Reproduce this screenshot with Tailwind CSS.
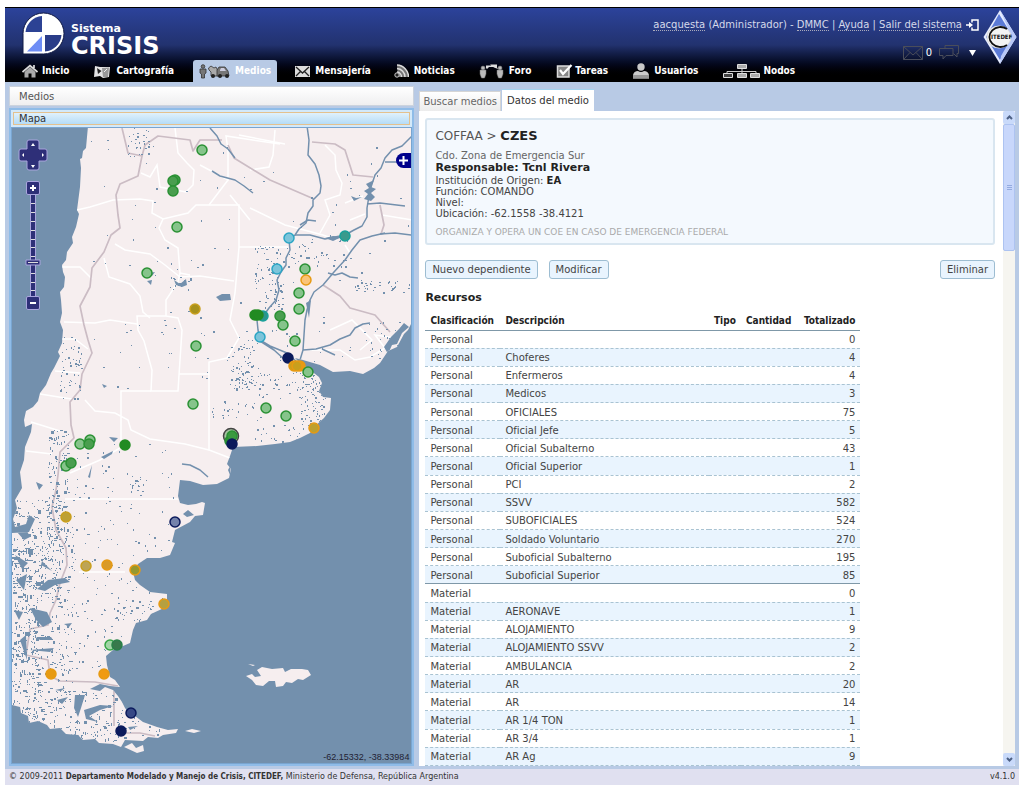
<!DOCTYPE html>
<html lang="es">
<head>
  <meta charset="UTF-8">
  <meta name="viewport" content="width=device-width, initial-scale=1">
  <title>Sistema CRISIS - Medios</title>
  <script src="https://cdn.jsdelivr.net/npm/@tailwindcss/browser@4"></script>
</head>
<body class="bg-white font-['DejaVu_Sans',sans-serif] text-[10px] leading-[12px] text-[#444]">
<div class="flex h-screen flex-col px-[5px] pt-[7px] pb-[6px]">

  <!-- Header -->
  <header class="flex h-[75px] shrink-0 flex-col border-t border-black bg-linear-to-b from-[#2c439b] via-[#22326f] via-50% to-black to-95% text-white">
    <div class="flex h-[52px] justify-between">
      <a href="#" class="flex pt-[4px] pl-[17px]">
        <svg class="h-[43px] w-[43px]" viewBox="0 0 43 43">
          <path d="M1 42V21.500A20.500 20.500 0 1 1 21.500 42Z" fill="#fff" stroke="#111a45" stroke-width="1"/>
          <path d="M20 4V20H3.500A18 18 0 0 1 20 4Z" fill="#2c4294"/>
          <path d="M23 23H39.500A18 18 0 0 1 23 39.500Z" fill="#2a3c88"/>
          <path d="M5 39.500L20 24V39.500Z" fill="#6e8df5"/>
        </svg>
        <span class="flex flex-col pt-[11px] pl-[6px] font-bold">
          <span class="text-[11px] leading-[12px]">Sistema</span>
          <span class="text-[24px] leading-[22px]">CRISIS</span>
        </span>
      </a>
      <div class="flex gap-[4px] pr-[2px]">
        <div class="flex flex-col items-end gap-[14px] pt-[11px]">
          <div class="flex items-center gap-[4px] text-[#d5d9ea]">
            <span><a href="#" class="border-b border-dotted border-[#aab]">aacquesta</a> (Administrador) - <a href="#" class="border-b border-dotted border-[#aab]">DMMC</a> | <a href="#" class="border-b border-dotted border-[#aab]">Ayuda</a> | <a href="#" class="border-b border-dotted border-[#aab]">Salir del sistema</a></span>
            <svg class="h-[12px] w-[13px]" viewBox="0 0 13 12" fill="none" stroke="#fff" stroke-width="1.500"><path d="M6 3.500V1H12V11H6V8.500M0 6H5"/><path d="M3 3L7 6L3 9Z" fill="#fff" stroke="none"/></svg>
          </div>
          <div class="flex items-center gap-[3px] pr-[3px]">
            <svg class="h-[14px] w-[20px]" viewBox="0 0 20 14" fill="none" stroke="#4a4d5a"><path d="M.5.5H19.500V13.500H.5ZM.5.5L10 9L19.500.5M.5 13.500L7 6.500M19.500 13.500L13 6.500"/></svg>
            <span>0</span>
            <svg class="ml-[4px] h-[15px] w-[20px]" viewBox="0 0 20 15" fill="none" stroke="#4a4d5a"><path d="M6 3.500V.5H19.500V8.500H18V12L14.500 8.500M.5 3.500H14V10.500H7L4 14V10.500H.5Z"/></svg>
            <svg class="ml-[7px] h-[6px] w-[7px]" viewBox="0 0 7 6"><path d="M0 0H7L3.500 6Z" fill="#fff"/></svg>
          </div>
        </div>
        <svg class="mt-[2px] h-[54px] w-[34px] shrink-0" viewBox="0 0 34 54">
          <path d="M17 0L33.500 27L17 54L.5 27Z" fill="#e6ecff"/>
          <path d="M16 4L30 27L17 50L3 27Z" fill="#5b7ad6"/>
          <path d="M17 0L33.500 27L17 54L18 46L29 27Z" fill="#b8c8f8"/>
          <ellipse cx="16" cy="27" rx="12" ry="11" fill="#f4f4f4" stroke="#ddd"/>
          <path d="M24 19A11 10 0 1 0 24 35" fill="none" stroke="#111" stroke-width="1.800"/>
          <text x="8" y="29" font-family="DejaVu Sans Condensed, DejaVu Sans" font-size="6" font-weight="700" fill="#111">ITEDEF</text>
        </svg>
      </div>
    </div>

    <nav class="flex h-[22px] gap-[3px] pl-[6px] font-['DejaVu_Sans_Condensed','DejaVu_Sans',sans-serif] font-bold">
      <a href="#" class="mx-[5px] flex items-center gap-[4px] px-[6px]">
        <svg class="h-[14px] w-[16px]" viewBox="0 0 16 14"><path d="M2.500 8L8 3L13.500 8V13.500H9.500V9.500H6.500V13.500H2.500Z" fill="#aaa"/><path d="M.5 8L8 1.500L15.500 8M12 1V4" fill="none" stroke="#ddd" stroke-width="1.700"/></svg>Inicio</a>
      <a href="#" class="mx-[5px] flex items-center gap-[5px] px-[6px]">
        <svg class="h-[13px] w-[17px]" viewBox="0 0 17 13"><path d="M1 1L6 2L16 2L15 12L9 13L6 11L0 12Z" fill="#e4e4e4"/><path d="M8 3L15 2.500L14 12L9 12Z" fill="#999"/><path d="M3 3L7.500 6L4 9Z" fill="#222"/><path d="M10 7L13 4" stroke="#eee"/></svg>Cartografía</a>
      <a href="#" class="mx-[5px] flex items-center gap-[5px] rounded-t-[3px] bg-[#b8cae5] px-[6px]">
        <svg class="h-[15px] w-[31px]" viewBox="0 0 31 15"><g fill="#777" stroke="#333" stroke-width=".8"><circle cx="4" cy="2.500" r="1.800"/><path d="M1 5H7V9L5.500 10V14H2.500V10L1 9Z"/><path d="M9.500 4L12 2L15 4L17 3L19 7L23 7L23 12H12V8L10 6Z" fill="#aaa"/><path d="M18 11V6L20 3H26L29 7L30 12H18Z" fill="#777"/></g><path d="M21 6L22 4H25L27 7H21Z" fill="#ccd"/><g fill="#222"><circle cx="14" cy="12" r="2"/><circle cx="21" cy="12" r="2"/><circle cx="28" cy="12" r="2"/></g></svg>Medios</a>
      <a href="#" class="mx-[5px] flex items-center gap-[5px] px-[5px]">
        <svg class="h-[11px] w-[15px]" viewBox="0 0 15 11"><path d="M0 0H15V11H0Z" fill="#ddd"/><path d="M1 1L7.500 7L14 1M1 10L5.500 5.500M14 10L9.500 5.500" fill="none" stroke="#222" stroke-width="1.300"/></svg>Mensajería</a>
      <a href="#" class="mx-[5px] flex items-center gap-[5px] px-[5px]">
        <svg class="h-[14px] w-[15px]" viewBox="0 0 15 14"><path d="M3 1A12 12 0 0 1 14.500 13H4Z" fill="#777"/><g fill="none" stroke="#ddd" stroke-width="1.500"><path d="M3 1A12 12 0 0 1 14.500 13M3 4.500A8.500 8.500 0 0 1 11 13M3 8A5 5 0 0 1 7.500 13"/></g><circle cx="3" cy="11" r="2.200" fill="#222" stroke="#ccc"/></svg>Noticias</a>
      <a href="#" class="mx-[5px] flex items-center gap-[5px] px-[6px]">
        <svg class="h-[16px] w-[25px]" viewBox="0 0 25 16"><g fill="#bbb" stroke="#777" stroke-width=".5"><circle cx="4" cy="5" r="2"/><path d="M1 7H7V11L5.500 15H2.500L1 11Z"/><circle cx="21" cy="5" r="2"/><path d="M18 7H24V11L22.500 15H19.500L18 11Z"/></g><path d="M7 5V2.500H13V4H10L8 6M11 1.500H18V4.500L19 6L15 4.500" fill="#ddd"/></svg>Foro</a>
      <a href="#" class="mx-[5px] flex items-center gap-[2px] px-[6px]">
        <svg class="h-[14px] w-[17px]" viewBox="0 0 17 14"><path d="M1.500 2H13V13H1.500Z" fill="#888" stroke="#ddd" stroke-width="1.500"/><path d="M4 6L7 10L15.500 1" fill="none" stroke="#fff" stroke-width="2.200"/></svg>Tareas</a>
      <a href="#" class="mx-[5px] flex items-center gap-[5px] px-[6px]">
        <svg class="h-[16px] w-[16px]" viewBox="0 0 16 16"><circle cx="8" cy="4" r="3.700" fill="#c8c8c8"/><path d="M0 15.500V12Q1 8 5 8Q8 10 11 8Q15 8 16 12V15.500Z" fill="#ccc"/><path d="M0 12H16V15.500H0Z" fill="#999"/></svg>Usuarios</a>
      <a href="#" class="mx-[5px] flex items-center gap-[3px] px-[6px]">
        <svg class="h-[14px] w-[37px]" viewBox="0 0 37 14"><path d="M19 5V10M4 10V7.500H33V10" fill="none" stroke="#ccc"/><g fill="#aaa" stroke="#ddd"><path d="M14.500.5H23.500V4.500H14.500Z"/><path d="M.5 9.500H9.500V13.500H.5Z" fill="#444"/><path d="M14.500 9.500H23.500V13.500H14.500Z"/><path d="M27.500 9.500H36.500V13.500H27.500Z"/></g></svg>Nodos</a>
    </nav>
  </header>

  <!-- Main -->
  <main class="grid min-h-0 flex-1 grid-cols-[405fr_595fr] gap-[5px] bg-[#b8cae5] px-[4px] pt-[4px] pb-[3px]">

    <section class="flex min-h-0 flex-col gap-[2px]">
      <h2 class="h-[20px] border border-[#ccd3dd] bg-linear-to-b from-white to-[#efeff0] px-[9px] leading-[19px] text-[#555]">Medios</h2>
      <div class="flex min-h-0 flex-1 flex-col border-2 border-[#8fbce8] bg-[#d3e9fa]">
        <h3 class="m-[2px] h-[13px] border border-[#e4c18e] bg-linear-to-b from-[#e0f1fc] to-[#b5dcf7] px-[5px] leading-[12px] text-[#333]">Mapa</h3>
        <div class="relative min-h-0 flex-1 overflow-hidden border border-[#79a5d0] bg-[#7390ad]">
          <svg id="map" class="block h-full w-full" viewBox="12 128 400 635" preserveAspectRatio="xMinYMin slice">
            <defs>
              <clipPath id="landClip"><use href="#land"/></clipPath>
            </defs>
            <path id="land" fill="#f6eeef" d="M88 126L86 148L83 151L82 158L80 159L81 168L80 187L77 210L79 214L76 227L72 237L73 243L67 252L66 260L62 265L63 272L65 277L64 287L60 292L61 300L62 313L60 322L63 330L62 343L58 352L60 356L54 368L51 373L46 385L40 393L38 401L33 407L26 411L24 420L25 427L32 424L31 432L25 447L24 460L20 472L22 488L15 500L17 508L13 519L15 527L26 524L29 515L35 519L29 532L12 533V705L20 707L21 713L28 716L29 723L38 721L47 725L50 729L60 728L66 734L78 735L83 740L95 739L99 743L113 744L121 747L125 740L143 741L148 737L158 738L163 735L176 733L178 729L168 730L157 727L143 722L135 716L128 712L125 708L122 702L118 696L113 690L105 687L100 691L90 689L100 684L110 686L120 687L115 680L110 677L107 665L106 656L113 650L123 646L130 643L133 630L136 623L147 620L151 614L164 608L167 602L167 594L150 592L140 585L135 580L133 572L138 564L147 558L160 558L170 555L175 543L172 542L175 530L190 522L195 516L203 515L205 503L202 502L196 504L188 505L180 503L178 496L180 480L190 481L203 485L217 484L229 478L231 469L227 464L230 456L233 447L257 446L275 444L290 442L300 438L310 433L314 427L324 418L330 410L331 398L323 397L319 391L322 383L319 377L310 370L300 363L295 358L303 360L320 365L333 372L350 371L363 374L374 368L380 363L388 351L397 347L404 334L408 330L412 322V126Z"/>
            <g fill="#f6eeef">
              <path d="M124 747L132 743L136 748L143 745L144 751L137 753ZM185 731L192 729L201 731L194 733Z"/>
              <path d="M246 676L252 674L255 677L261 676L257 670L262 667L272 669L283 668L285 672L291 669L302 669L308 670L311 675L303 680L298 679L292 683L286 682L283 686L276 687L275 681L269 681L263 686L256 685L252 680ZM248 664L255 665L253 666Z"/>
            </g>
            <g clip-path="url(#landClip)">
              <!-- Province limits -->
              <g fill="none" stroke="#fff" stroke-width="1.500">
                <path d="M175 128L178 153L187 163L194 170L193 185L186 192L160 187L157 165L150 177L141 173"/>
                <path d="M77 210L90 207L113 200L140 199L153 201L152 213L163 219L188 213L196 205L239 205V247L235 293L230 320L239 338L227 358L209 362V375L209 450L230 458"/>
                <path d="M163 219L159 228L165 240L178 248L180 273L178 282L166 300V316H137L138 330L144 341L152 370L151 391H178L179 375L182 330L178 318L166 316"/>
                <path d="M239 247H288M200 165L228 180L228 150L226 136L280 144M228 180L209 205"/>
                <path d="M115 244L125 250L150 254L165 265L180 277L200 276L234 281M180 273L190 275"/>
                <path d="M62 267L80 267L92 279M104 258L109 277L130 284L140 296L143 312L150 318M64 322L95 323L110 320L137 324"/>
                <path d="M151 391H121V440M179 374H209M85 400L95 411L115 413L128 420L131 430L150 439L185 444L209 450M120 448L100 460L70 473M65 499H178M79 572H125"/>
                <path d="M60 339L75 339L88 349M55 371L80 373M40 394L65 398L72 399M31 422L60 431M26 451L52 454"/>
                <path d="M239 135L285 144M275 130L273 155L269 167L250 170M250 208L285 225L323 235L337 240M325 145L335 155L336 170L342 183L340 195L325 200L330 215L320 233M345 203L363 196M365 214L350 220M330 330L352 320L372 340L360 350M310 350L340 350L355 360L370 357L385 348L375 335L395 338M250 220L230 195M382 215L412 220M345 245L350 253"/>
              </g>
              <g fill="none" stroke="#cbbcc4" stroke-width="1.700" stroke-linejoin="round">
                <path d="M122 128L128 153L142 156L138 176L120 184L116 195L118 215L120 228L111 235L104 252L92 268L90 287L80 306L84 325L88 340L92 353L82 374L80 390L70 402L71 425L74 438L60 452L58 475L56 490L52 507L56 530L66 548L67 565L60 583L56 600L50 613L48 625L30 629L26 655L48 660L50 676L60 681L95 682L118 686"/>
                <path d="M142 156L145 145L158 136L190 140L193 151L200 140L222 140M312 142L335 144L345 150L353 175L373 177M228 145L234 158L270 180L314 199M380 205L384 225L381 234M323 285L340 296L350 308L375 315L390 332M114 691V726M123 733L140 733L155 736"/>
              </g>
              <!-- Rivers and reservoirs -->
              <g fill="none" stroke="#7390ad" stroke-width="1.500" stroke-linejoin="round">
                <path d="M307 126L309 140L308 155L315 164L319 175L321 186L320 193L313 200L313 206L308 213L306 223L299 229L295 235L289 240L290 250L286 258L286 265L281 272L277 280L279 290L276 300L269 308L264 315L257 320L258 330L260 340L270 346L287 353L298 363L285 360L274 350L260 341"/>
                <path d="M210 128L217 136L221 144L228 149L235 158M212 171L220 176L235 180L244 186L253 193M295 235L310 235L325 239L345 235L354 230L362 226L367 217L367 208L370 190L375 175L381 168L385 158L392 150L402 146L412 136M385 162H412M367 204L380 203L405 206M380 234L395 233L412 235"/>
                <path d="M385 233L372 236L360 240L352 250L345 260L334 272L323 285L314 292L310 300L307 310L305 320L304 335L303 350L300 360M328 273L335 275L342 273L350 277L358 278M303 350L316 349L330 345L340 339L350 335L355 328L363 324L370 323M322 349L335 355M182 464L190 465L200 470L208 477M300 225L308 220L316 221"/>
              </g>
              <g fill="#7390ad">
                <path d="M366 184L374 180L371 187L376 189L371 193L375 197L371 201L364 199L368 194L364 191L369 188ZM351 196L356 198L362 197L354 201ZM325 238L333 236L342 237L333 241ZM216 297L222 294L230 294L231 300L220 301ZM174 280L180 284L186 279L187 285L182 287L176 285ZM147 281L152 280L151 285ZM148 273L155 272L152 276ZM109 437L118 438L114 442ZM101 457L113 451L112 454L104 459ZM88 477L92 465L90 478ZM102 384L107 386L104 388ZM228 470L231 464L230 475ZM183 514L188 510L194 515L187 517ZM384 347L391 337L399 329L404 323L409 327L402 333L397 344L392 345L388 354ZM306 303L311 300L309 318Z"/>
                <path d="M37 589L48 580L65 578L70 582L55 585L45 591ZM30 608L47 612L52 622L43 627L36 620ZM36 637L51 637L53 640L40 640ZM30 650L54 648L50 652ZM64 624L72 623L69 627ZM75 695L85 695L81 708L78 717L74 708ZM84 710L100 705L113 706L100 710L89 716L98 722L86 719ZM57 700L68 697L62 704ZM42 561L52 571L41 565ZM128 727L138 726L130 730ZM17 532L26 529L30 537L24 540ZM36 482L43 485L39 490ZM15 555L28 563L22 569ZM16 580L27 574L24 590ZM20 640L26 635L27 660ZM14 610L23 612L19 620ZM55 690L65 688L61 691Z"/>
              </g>
              <g id="speckles" fill="#7390ad"></g>
            </g>
            <g id="markers" stroke-width="1.500"></g>
            <!-- Pan and zoom -->
            <g fill="#2e2f78" stroke="#a9a4dd" stroke-width="1">
              <path d="M27 142Q27 140 29 140H37Q39 140 39 142V149H45Q47 149 47 151V159Q47 161 45 161H39V168Q39 170 37 170H29Q27 170 27 168V161H21Q19 161 19 159V151Q19 149 21 149H27Z"/>
              <path d="M30.500 194H35.500V298H30.500Z"/>
              <path d="M26 260H40V265H26Z"/>
            </g>
            <path d="M33 143L35 146H31ZM33 168L35 165H31ZM22 155L24 153V157ZM44 155L42 153V157Z" fill="#fff"/>
            <path d="M31 203.500H35M31 212.500H35M31 221.500H35M31 230.500H35M31 239.500H35M31 247.500H35M31 256.500H35M31 273.500H35M31 282.500H35M31 290.500H35M28 262.500H38" stroke="#ddd"/>
          </svg>
          <button aria-label="Acercar" class="absolute top-[53px] left-[14px] flex h-[14px] w-[14px] items-center justify-center rounded-[2px] border border-[#a9a4dd] bg-[#2e2f78]"><svg class="h-[6px] w-[6px]" viewBox="0 0 6 6"><path d="M3 0V6M0 3H6" stroke="#fff" stroke-width="2"/></svg></button>
          <input type="range" aria-label="Nivel de zoom" min="0" max="12" value="4" class="absolute top-[68px] left-[14px] h-[96px] w-[14px] opacity-0 [writing-mode:vertical-lr]">
          <button aria-label="Alejar" class="absolute top-[168px] left-[14px] flex h-[14px] w-[14px] items-center justify-center rounded-[2px] border border-[#a9a4dd] bg-[#2e2f78]"><svg class="h-[2px] w-[6px]" viewBox="0 0 6 2"><path d="M0 1H6" stroke="#fff" stroke-width="2"/></svg></button>
          <button aria-label="Capas" class="absolute top-[25px] right-0 flex h-[15px] w-[15px] items-center justify-center rounded-l-full bg-[#00008b]"><svg class="h-[9px] w-[9px]" viewBox="0 0 9 9"><path d="M4.500 0V9M0 4.500H9" stroke="#fff" stroke-width="2"/></svg></button>
          <span class="absolute right-[2px] bottom-0 font-['Liberation_Sans',sans-serif] text-[9px] text-[#223]">-62.15332, -38.33984</span>
        </div>
      </div>
    </section>

    <section class="flex min-h-0 flex-col pt-[3px]">
      <div class="flex h-[22px] shrink-0 items-end gap-[1px]">
        <button class="h-[20px] border border-b-0 border-[#d5d5d5] bg-linear-to-b from-white to-[#ececec] px-[3px] text-[#666]">Buscar medios</button>
        <button class="h-[22px] border-t border-[#a5d4ef] bg-white px-[5px] text-[#333]">Datos del medio</button>
      </div>
      <div class="flex min-h-0 flex-1 bg-white">
        <div class="flex min-h-0 min-w-0 flex-1 flex-col overflow-hidden pt-[7px] pr-[8px] pl-[6px]">
          <div class="h-[127px] shrink-0 rounded-[3px] border-2 border-[#d9e6f0] bg-[#f4f9fe] px-[8px] pt-[8px]">
            <h1 class="mb-[6px] text-[12px] leading-[15px] text-[#555]">COFFAA &gt; <b class="text-[13px] text-[#222]">CZES</b></h1>
            <p class="leading-[11px] text-[#666]">Cdo. Zona de Emergencia Sur</p>
            <p class="text-[11px] leading-[14px] font-bold text-[#222]">Responsable: Tcnl Rivera</p>
            <p class="leading-[11px]">Institución de Origen: <b class="text-[#222]">EA</b></p>
            <p class="leading-[11px]">Función: COMANDO</p>
            <p class="leading-[11px]">Nivel:</p>
            <p class="leading-[11px]">Ubicación: -62.1558 -38.4121</p>
            <p class="mt-[7px] text-[9px] text-[#aaa]">ORGANIZA Y OPERA UN COE EN CASO DE EMERGENCIA FEDERAL</p>
          </div>
          <div class="mt-[15px] flex shrink-0 gap-[11px]">
            <button class="h-[19px] rounded-[3px] border border-[#9dbdd2] bg-[#e9f4fe] px-[6px] text-[#444]">Nuevo dependiente</button>
            <button class="h-[19px] rounded-[3px] border border-[#9dbdd2] bg-[#e9f4fe] px-[6px] text-[#444]">Modificar</button>
            <button class="ml-auto h-[19px] rounded-[3px] border border-[#9dbdd2] bg-[#e9f4fe] px-[6px] text-[#444]">Eliminar</button>
          </div>
          <h2 class="mt-[12px] mb-[7px] shrink-0 text-[11px] leading-[14px] font-bold text-[#222]">Recursos</h2>
          <div class="min-h-0 flex-1">
            <table class="h-full w-[435px] border-collapse">
              <thead>
                <tr class="h-[18px] border-b border-[#7f98a8] text-left font-['DejaVu_Sans_Condensed','DejaVu_Sans',sans-serif] text-[#222]">
                  <th class="w-[75px] px-[5px]">Clasificación</th>
                  <th class="px-[5px]">Descripción</th>
                  <th class="w-[32px] px-[5px]">Tipo</th>
                  <th class="w-[55px] px-[5px]">Cantidad</th>
                  <th class="w-[64px] px-[5px] text-right">Totalizado</th>
                </tr>
              </thead>
              <tbody id="resources"></tbody>
            </table>
          </div>
        </div>
        <div class="flex w-[12px] shrink-0 flex-col bg-[#f6f5f0]">
          <button aria-label="Subir" class="flex h-[13px] items-center justify-center rounded-[2px] bg-[#c9dafa]"><svg class="h-[5px] w-[7px]" viewBox="0 0 7 5"><path d="M1 4L3.500 1.500L6 4" fill="none" stroke="#4d6185" stroke-width="2"/></svg></button>
          <div class="flex h-[127px] flex-col items-center justify-center gap-[1px] rounded-[2px] border border-[#adc3f1] bg-[#c8d7fb]">
            <i class="h-px w-[5px] bg-[#94abe0]"></i><i class="h-px w-[5px] bg-[#94abe0]"></i><i class="h-px w-[5px] bg-[#94abe0]"></i>
          </div>
          <button aria-label="Bajar" class="mt-auto flex h-[13px] items-center justify-center rounded-[2px] bg-[#c9dafa]"><svg class="h-[5px] w-[7px]" viewBox="0 0 7 5"><path d="M1 1L3.500 3.500L6 1" fill="none" stroke="#4d6185" stroke-width="2"/></svg></button>
        </div>
      </div>
    </section>
  </main>

  <!-- Footer -->
  <footer class="flex h-[16px] shrink-0 items-center justify-between bg-[#e0e0f0] px-[4px] text-[8px] text-[#333]">
    <p>© 2009-2011 <b class="font-['DejaVu_Sans_Condensed','DejaVu_Sans',sans-serif]">Departamento Modelado y Manejo de Crisis, CITEDEF,</b> Ministerio de Defensa, República Argentina</p>
    <span>v4.1.0</span>
  </footer>
</div>

<script>
  const resources = [
    ["Personal", "", 0], ["Personal", "Choferes", 4], ["Personal", "Enfermeros", 4],
    ["Personal", "Medicos", 3], ["Personal", "OFICIALES", 75], ["Personal", "Oficial Jefe", 5],
    ["Personal", "Oficial Subalterno", 43], ["Personal", "Oficial Superior", 1], ["Personal", "PCI", 2],
    ["Personal", "SSVV", 582], ["Personal", "SUBOFICIALES", 524], ["Personal", "Soldado Voluntario", 270],
    ["Personal", "Suboficial Subalterno", 195], ["Personal", "Suboficial Superior", 85],
    ["Material", "", 0], ["Material", "AERONAVE", 1], ["Material", "ALOJAMIENTO", 9],
    ["Material", "ALOJAMIENTO SSVV", 2], ["Material", "AMBULANCIA", 2], ["Material", "AR", 20],
    ["Material", "AR", 14], ["Material", "AR 1/4 TON", 1], ["Material", "AR 3/4", 1], ["Material", "AR Ag", 9]
  ];
  document.getElementById("resources").innerHTML = resources.map((r, i) => {
    const last = resources[i + 1] && resources[i + 1][0] !== r[0];
    return `<tr class="border-b ${last ? 'border-solid border-[#7f98a8]' : 'border-dashed border-[#a9c3d2]'} ${i % 2 ? 'bg-[#e9f4fe]' : ''}">
      <td class="px-[5px] pt-[2px]">${r[0]}</td><td class="px-[5px] pt-[2px]">${r[1]}</td><td></td><td></td><td class="px-[5px] pt-[2px] text-right">${r[2]}</td>
    </tr>`;
  }).join("");

  // x, y, stroke, fill
  const G = "#2a9134", g = "#86c48b", d = "#4a9e4f", Y = "#c99f1c", O = "#e79a12", C = "#2ba5c4", c = "#7cc4da", N = "#0b1a5c";
  const markers = [
    [202,150,G,g],[175,180,G,d],[173,181,G,d],[173,191,G,d],[177,227,G,g],[147,273,G,g],[195,309,Y,"#a8911c"],[196,346,G,g],[193,404,G,g],
    [289,238,C,c],[277,269,C,c],[345,236,"#18a09a","#3a9a8c"],[305,269,G,g],[306,280,O,"#fac478"],[299,293,G,g],[299,309,G,g],
    [255,315,"#228b22","#228b22"],[263,316,"#18a09a","#2c948c"],[258,315,"#228b22","#228b22"],[280,316,G,d],[283,325,G,g],[260,337,C,c],[295,341,G,g],
    [288,358,N,N],[294,366,O,Y],[300,366,O,O],[297,366,O,Y],[308,372,G,g],[266,408,G,g],[286,416,G,g],[314,428,O,"#bda030"],
    [80,444,G,g],[90,440,G,g],[89,444,G,d],[125,445,"#228b22","#228b22"],[66,466,G,g],[71,463,G,d],[66,517,Y,"#bda035"],[175,522,N,"#7482ab"],
    [86,566,Y,"#bda455"],[107,565,O,"#d99a28"],[135,570,O,"#97982e"],[164,604,O,"#b5a040"],[110,645,"#35a445","#a2d6a6"],[117,645,"#287f48","#37794b"],
    [51,674,O,O],[104,674,O,"#f09a10"],[131,713,N,"#364885"],[121,731,N,N]
  ];
  let dots = markers.map(m => `<circle cx="${m[0]}" cy="${m[1]}" r="5" stroke="${m[2]}" fill="${m[3]}"/>`).join("");
  dots += `<circle cx="231" cy="436" r="7.500" stroke="#444" fill="#a5c4a0"/><circle cx="230" cy="441" r="5" stroke="#2a9134" fill="#2a9134"/><circle cx="232" cy="436" r="5" stroke="#2a9134" fill="#3a9a3f"/><circle cx="232" cy="444" r="5" stroke="#0b1a5c" fill="#0b1a5c"/>`;
  document.getElementById("markers").innerHTML = dots;

  // Small lakes: x, y, width, height, count, largest size
  const areas = [
    [128,128,22,28,30,2],[90,140,320,200,90,2],[64,330,340,60,60,2],[255,245,28,65,80,2],[287,235,60,32,45,2],[355,280,55,12,35,2],
    [230,340,25,50,70,2],[255,370,55,30,40,2],[300,375,25,50,90,2],[210,400,45,20,25,2],[255,415,50,28,25,2],[170,275,20,15,20,2],
    [60,335,22,65,50,2],[48,430,20,110,130,3],[12,500,48,100,260,3],[12,540,26,160,120,5],[12,600,30,120,170,3],[40,540,35,170,140,3],
    [25,690,100,55,200,3],[60,500,110,180,190,2],[115,600,40,20,30,2],[115,690,45,45,35,2],[66,440,110,60,40,2],[370,320,38,40,25,2],[130,475,12,20,20,2]
  ];
  let seed = 7;
  const rnd = () => (seed = (seed * 16807) % 2147483647) / 2147483647;
  const size = max => (rnd() < 0.7 ? 1 : 1 + Math.ceil(rnd() * (max - 1)));
  let lakes = "";
  areas.forEach(a => {
    for (let i = 0; i < a[4]; i++) {
      lakes += `<rect x="${Math.round(a[0] + rnd() * a[2])}" y="${Math.round(a[1] + rnd() * a[3])}" width="${size(a[5])}" height="${size(a[5])}"/>`;
    }
  });
  document.getElementById("speckles").innerHTML = lakes;
</script>
</body>
</html>
